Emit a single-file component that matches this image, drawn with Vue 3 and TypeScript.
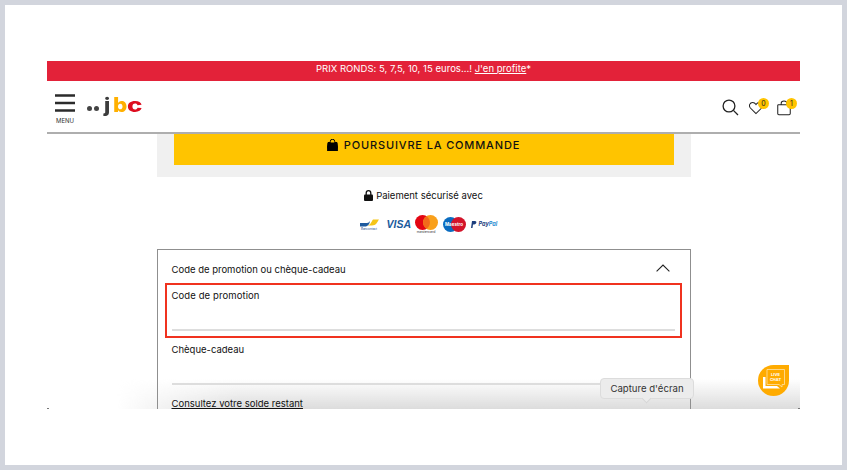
<script setup lang="ts">
const badges: Record<string, number> = { heart: 0, bag: 1 };
</script>

<template>
  <div class="frame">
    <div class="page">
      <div class="fade"></div>
      <div class="promo">PRIX RONDS: 5, 7,5, 10, 15 euros...! <a>J'en profite</a>*</div>
      <header class="head">
        <div class="left">
          <div class="menu">
            <svg width="20" height="19" viewBox="0 0 20 19"><path d="M0 1.500h20M0 9h20M0 16.500h20" stroke="#2b2b2b" stroke-width="2.400" fill="none"/></svg>
            <span>MENU</span>
          </div>
          <div class="logo"><i></i><i></i><b class="j">j</b><b class="b">b</b><b class="c">c</b></div>
        </div>
        <div class="icons">
          <svg class="search" width="17" height="17" viewBox="0 0 17 17"><circle cx="7" cy="7" r="5.900" fill="none" stroke="#222" stroke-width="1.300"/><path d="M11.400 11.400 16 16" stroke="#222" stroke-width="1.300"/></svg>
          <div class="ico heart">
            <svg width="14" height="14" viewBox="0 0 15 14"><path d="M7.500 13 1.500 7C-.5 4.800.8 1 3.900 1c1.600 0 2.800 1 3.600 2.300C8.300 2 9.500 1 11.100 1c3.100 0 4.400 3.800 2.400 6z" fill="none" stroke="#222" stroke-width="1.100"/></svg>
            <span class="badge">{{ badges.heart }}</span>
          </div>
          <div class="ico bag">
            <svg width="14" height="16" viewBox="0 0 15 16"><path d="M1.500 4.500h12a1 1 0 0 1 .7.700v8.800a1.200 1.200 0 0 1-1.200 1.200H2a1.200 1.200 0 0 1-1.200-1.200V5.200a.8.8 0 0 1 .7-.7zM4.500 4.500V3a3 2.500 0 0 1 6 0v1.500" fill="none" stroke="#222" stroke-width="1.100"/></svg>
            <span class="badge">{{ badges.bag }}</span>
          </div>
        </div>
      </header>

      <main class="main">
        <section class="panel">
          <button class="cta">
            <svg width="11" height="12" viewBox="0 0 11 12"><path d="M1 3.500h9l.8 7.300a1 1 0 0 1-1 1.200H1.200a1 1 0 0 1-1-1.200zM3.300 4V2.500a2.200 2.200 0 0 1 4.400 0V4" fill="#000" stroke="#000" stroke-width="1"/><path d="M3.700 3.500v-1a1.800 1.800 0 0 1 3.600 0v1" fill="#ffc400"/></svg>
            POURSUIVRE LA COMMANDE
          </button>
        </section>

        <p class="secure">
          <svg width="9" height="11" viewBox="0 0 9 11"><path d="M2.200 5V3a2.300 2.300 0 0 1 4.600 0v2" fill="none" stroke="#111" stroke-width="1.300"/><rect y="4.500" width="9" height="6.500" rx="1" fill="#111"/></svg>
          Paiement sécurisé avec
        </p>

        <div class="pays">
          <div class="bct">
            <svg width="19" height="9" viewBox="0 0 19 9"><path d="M0 7.500h7c3 0 4-3 6-6h6c-2 3-3 6-7 6z" fill="#f5c518"/><path d="M0 8.500V5h7c1.500 0 2-1 3-2-.5 3-2 5.500-5 5.500z" fill="#1e5a9e"/></svg>
            <span>Bancontact</span>
          </div>
          <span class="visa">VISA</span>
          <div class="mc">
            <svg width="23" height="15" viewBox="0 0 23 15"><circle cx="7.500" cy="7.500" r="7.500" fill="#e30613"/><circle cx="15.500" cy="7.500" r="7.500" fill="#f9a01b"/><path d="M11.500 1.200a7.500 7.500 0 0 1 0 12.600 7.500 7.500 0 0 1 0-12.600z" fill="#f26a1b"/></svg>
            <span>mastercard</span>
          </div>
          <div class="mae">
            <svg width="23" height="15" viewBox="0 0 23 15"><circle cx="7.500" cy="7.500" r="7.500" fill="#0a6cc0"/><circle cx="15.500" cy="7.500" r="7.500" fill="#d3132a"/></svg>
            <span>Maestro</span>
          </div>
          <div class="pp">
            <svg width="6" height="7" viewBox="0 0 6 7"><path d="M1 0h3c2 0 2 3-1 3.500H2L1.500 7H0z" fill="#1c3d7c"/></svg>
            <span><b>Pay</b><em>Pal</em></span>
          </div>
        </div>

        <section class="box">
          <div class="box-head">
            <span>Code de promotion ou chèque-cadeau</span>
            <svg width="14" height="8" viewBox="0 0 14 8"><path d="M.6 7.400 7 1l6.400 6.400" fill="none" stroke="#222" stroke-width="1.100"/></svg>
          </div>
          <div class="field hl">
            <label>Code de promotion</label>
            <div class="rule"></div>
          </div>
          <div class="field second">
            <label>Chèque-cadeau</label>
            <div class="rule"></div>
          </div>
          <a class="balance">Consultez votre solde restant</a>
        </section>
      </main>

      <i class="tick tick-l"></i>
      <i class="tick tick-r"></i>
      <div class="chat">
        <svg width="31" height="31" viewBox="0 0 31 31">
          <path d="M15.500 0H31v15.500A15.500 15.500 0 1 1 15.500 0z" fill="#ffab00"/>
          <path d="M9 4.500h17.500v15h-2.500v2.500l-3-2.500H9z" fill="none" stroke="#ffe2a8" stroke-width=".8"/>
          <path d="M5 12h2.500v9H19l3 2.500h-17z" fill="#fff"/>
        </svg>
        <span class="chat-t">LIVE<br />CHAT</span>
      </div>
      <div class="tip">Capture d'écran</div>
    </div>
  </div>
</template>

<style scoped>
.frame {
  box-sizing: border-box;
  width: 837px;
  height: 460px;
  margin: 5px 0 0 5px;
  padding: 56px 42px 0;
  background: #fff;
  font-family: Inter, "Liberation Sans", sans-serif;
  color: #1c1c1c;
}
.page {
  position: relative;
  width: 753px;
  height: 348px;
  overflow: hidden;
}
.promo {
  height: 20px;
  line-height: 15px;
  background: #e32239;
  color: #fff;
  font-size: 9.500px;
  letter-spacing: .03px;
  text-align: center;
}
.promo a { text-decoration: underline; }
.head {
  box-sizing: border-box;
  height: 53px;
  border-bottom: 2px solid #aeaeae;
  display: flex;
  align-items: flex-start;
  justify-content: space-between;
  padding: 13px 9px 0 8px;
}
.left { display: flex; gap: 12px; }
.menu { display: flex; flex-direction: column; align-items: center; width: 20px; }
.menu span { font-size: 6px; margin-top: 4px; color: #333; }
.logo { display: flex; align-items: center; height: 24px; margin-top: -1px; }
.logo i { width: 5px; height: 5px; background: #444; border-radius: 50%; margin-right: 1px; margin-top: 7px; flex: none; }
.logo i + i { margin-right: 2px; margin-left: 1px; }
.logo b { font-size: 20px; font-weight: 800; line-height: 1; display: inline-block; transform-origin: left center; }
.logo .j { color: #3c3c3c; margin-left: 3px; transform: scaleX(1.1); }
.logo .b { color: #ffb000; margin-left: 3px; transform: scaleX(1.12); }
.logo .c { color: #dd0d1f; margin-left: 2px; transform: scaleX(1.3); }
.icons { display: flex; align-items: center; gap: 11px; padding-top: 5px; }
.ico { position: relative; width: 14px; height: 16px; display: flex; align-items: center; }
.heart { margin-left: -1px; }
.bag { margin-left: 3px; }
.badge {
  position: absolute;
  top: -2px;
  right: -6px;
  width: 11px;
  height: 11px;
  border-radius: 50%;
  background: #ffc400;
  font-size: 7px;
  line-height: 11px;
  text-align: center;
  color: #222;
}
.main { position: relative; z-index: 1; display: flex; flex-direction: column; align-items: center; }
.panel {
  width: 534px;
  height: 43px;
  box-sizing: border-box;
  padding: 0 17px;
  background: #f0f0f0;
}
.cta {
  width: 100%;
  height: 31px;
  border: 0;
  padding: 0 0 9px;
  background: #ffc400;
  display: flex;
  align-items: center;
  justify-content: center;
  gap: 6px;
  font-family: Inter, "Liberation Sans", sans-serif;
  font-size: 11px;
  font-weight: 500;
  letter-spacing: .85px;
  color: #111;
}
.secure {
  margin: 12px 0 0;
  height: 13px;
  display: flex;
  align-items: center;
  gap: 3px;
  font-size: 9.500px;
  color: #111;
}
.pays { display: flex; align-items: center; height: 20px; margin: 12px 0 0 9px; width: 137px; }
.bct { display: flex; flex-direction: column; align-items: center; width: 19px; }
.bct span { font-size: 3px; color: #1e4a8a; }
.visa { width: 23px; margin-left: 8px; font: italic 700 10.500px "Liberation Sans", sans-serif; color: #1a5a9c; }
.mc { margin-left: 5px; }
.mae { margin-left: 5px; }
.pp { margin-left: 5px; }
.mc, .mae { position: relative; display: flex; flex-direction: column; align-items: center; }
.mc span { font-size: 3.500px; color: #333; line-height: 4px; }
.mae { height: 15px; }
.mae span { position: absolute; left: 0; right: 0; top: 5px; text-align: center; color: #fff; font-size: 4.500px; font-weight: 700; }
.pp { display: flex; align-items: center; gap: 2px; font-size: 5.500px; }
.pp b { color: #1c3d7c; font-weight: 700; font-style: italic; }
.pp em { color: #2a8bd0; font-weight: 700; }
.box {
  box-sizing: border-box;
  width: 534px;
  height: 170px;
  margin-top: 15px;
  border: 1px solid #8f8f8f;
  padding: 0 7px;
  font-size: 9.500px;
  color: #111;
}
.box-head {
  box-sizing: border-box;
  height: 33px;
  padding: 6px 13px 0 7px;
  display: flex;
  align-items: center;
  justify-content: space-between;
}
.box-head svg { margin-top: -3px; }
.field { box-sizing: border-box; }
.field label { display: block; line-height: 12px; }
.hl {
  width: 517px;
  height: 55px;
  border: 2px solid #f0321f;
  padding: 5px 0 0 5px;
}
.hl label { letter-spacing: .1px; }
.hl .rule { margin-top: 27px; margin-right: 5px; }
.rule { height: 1.500px; background: #ddd; }
.second { padding: 6px 10px 0 7px; }
.second .rule { margin-top: 27px; }
.balance {
  display: block;
  margin: 13px 0 0 7px;
  text-decoration: underline;
}
.fade {
  position: absolute;
  left: 0;
  right: 0;
  bottom: 0;
  height: 30px;
  background: linear-gradient(to bottom, rgba(222,222,222,0) 0%, #dcdcdc 100%);
  -webkit-mask-image: linear-gradient(to right, transparent 70px, #000 190px);
  mask-image: linear-gradient(to right, transparent 70px, #000 190px);
}
.tick {
  position: absolute;
  bottom: 0;
  width: 2px;
  height: 1px;
  background: #777;
  z-index: 2;
}
.tick-l { left: 0; }
.tick-r { right: 0; }
.chat {
  position: absolute;
  z-index: 2;
  left: 711px;
  top: 304px;
  width: 31px;
  height: 31px;
}
.chat-t {
  position: absolute;
  left: 9px;
  top: 7px;
  width: 17px;
  text-align: center;
  font-size: 4px;
  line-height: 5px;
  font-weight: 700;
  color: #fff;
}
.tip {
  position: absolute;
  z-index: 3;
  left: 553px;
  top: 317px;
  width: 94px;
  height: 21px;
  box-sizing: border-box;
  border: 1px solid #dcdcdc;
  border-radius: 4px;
  background: #ececec;
  font-size: 9.600px;
  line-height: 19px;
  text-align: center;
  color: #333;
}
.tip::after {
  content: "";
  position: absolute;
  left: 42px;
  top: 16px;
  width: 6px;
  height: 6px;
  background: #ececec;
  transform: rotate(45deg);
  border-right: 1px solid #d6d6d6;
  border-bottom: 1px solid #d6d6d6;
}
</style>

<style>
html, body { background: #d2d5dd; overflow: hidden; }
</style>
